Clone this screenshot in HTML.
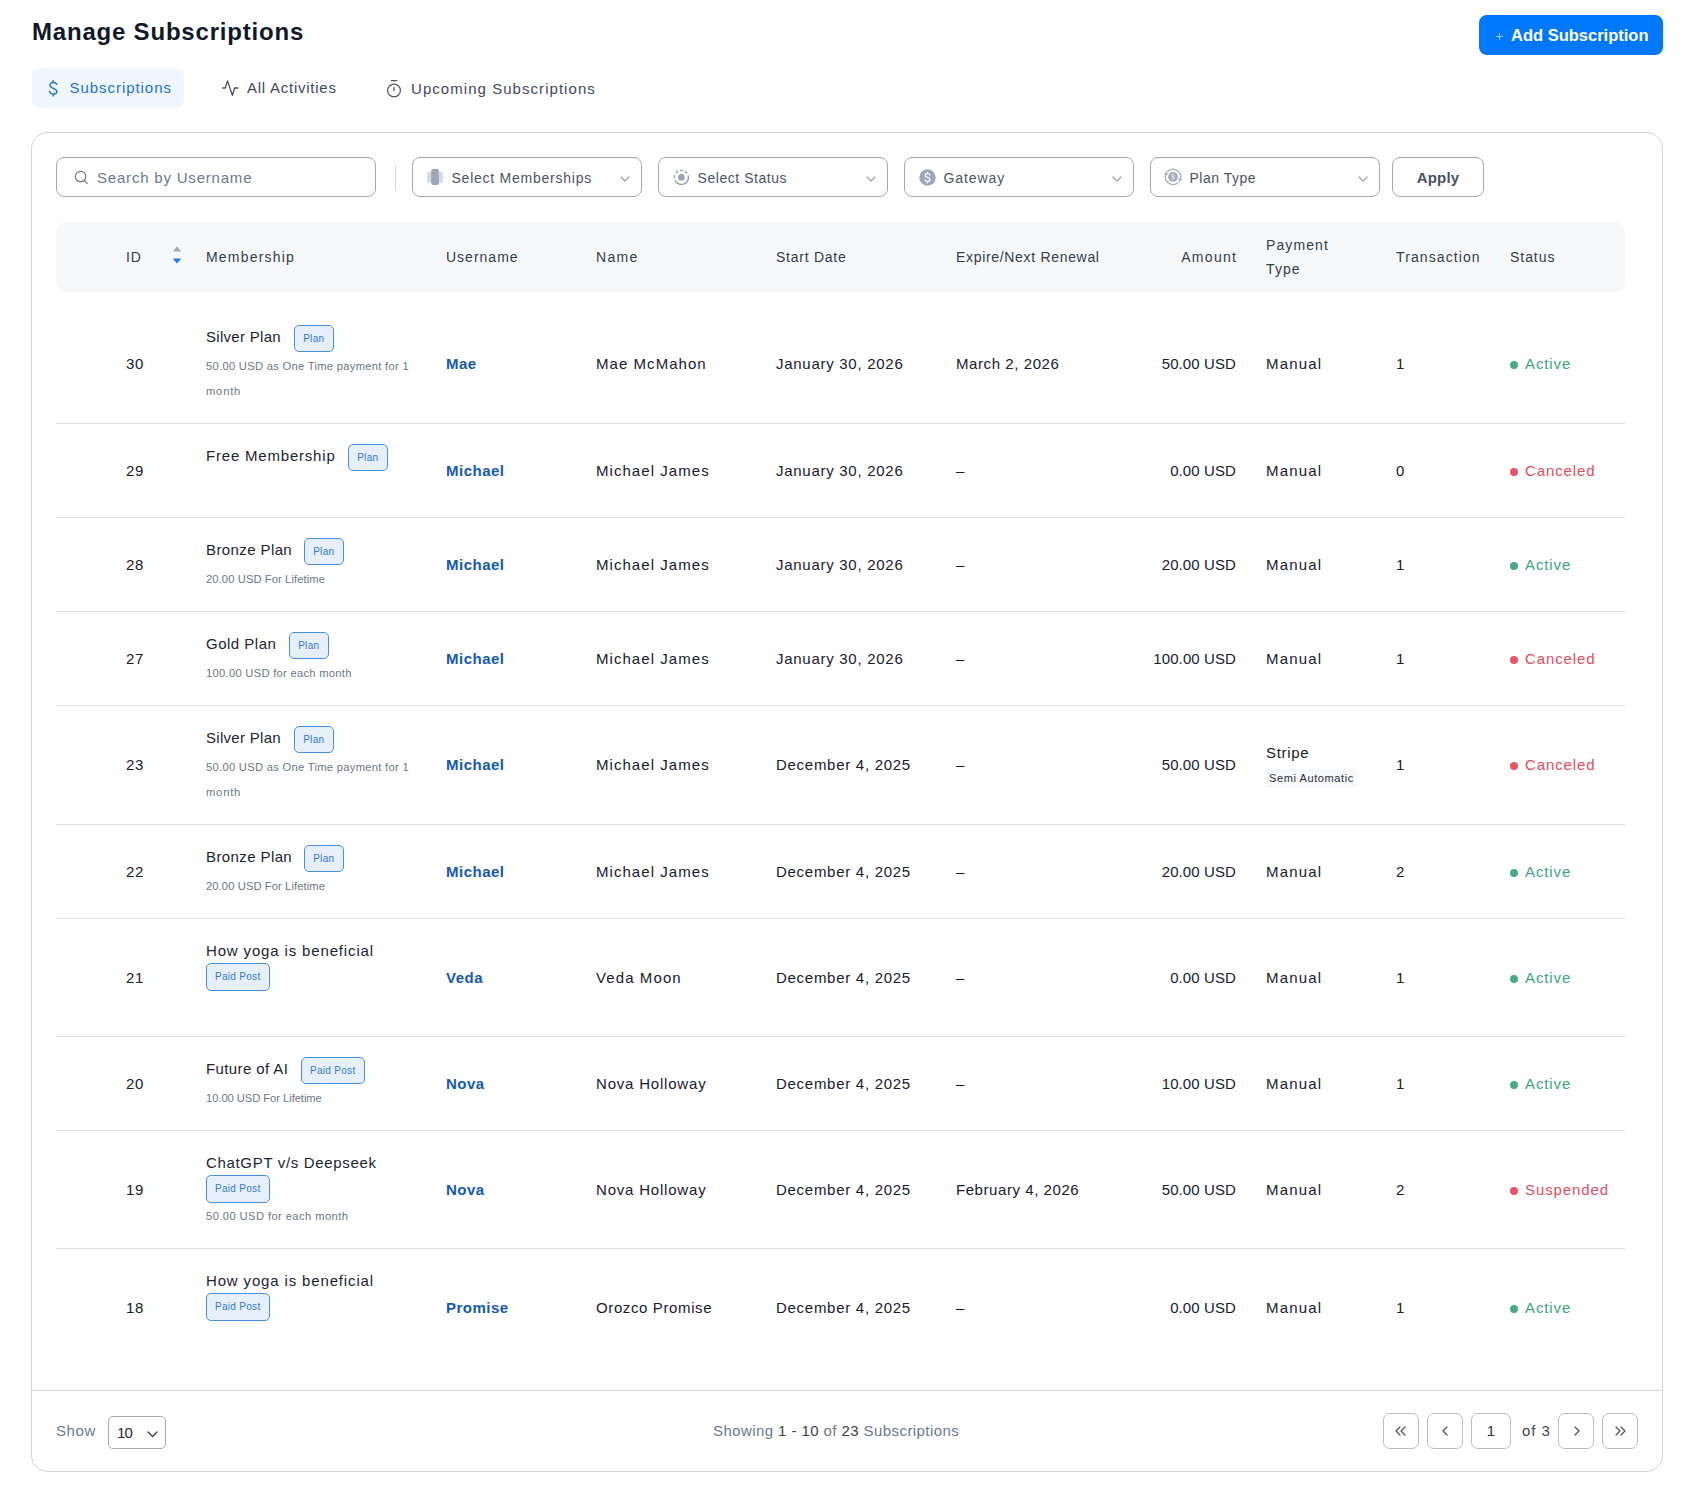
<!DOCTYPE html><html><head><meta charset="utf-8"><title>Manage Subscriptions</title><style>
*{box-sizing:border-box;margin:0;padding:0}
html,body{width:1696px;height:1497px;overflow:hidden;background:#fff}
body{position:relative;font-family:"Liberation Sans",sans-serif;color:#1f2937}
.a{position:absolute;white-space:nowrap}
h1{position:absolute;left:32px;top:14.7px;font-size:24px;line-height:34px;font-weight:700;color:#111827;letter-spacing:0.8px}
.addbtn{position:absolute;left:1479px;top:15px;width:184px;height:40px;background:#0077ff;border-radius:8px;color:#fff}
.addbtn .plus{position:absolute;left:17px;top:20.6px;width:7px;height:1px;background:#9fcbff}
.addbtn .plus:after{content:"";position:absolute;left:3px;top:-3px;width:1px;height:7px;background:#9fcbff}
.addbtn span{position:absolute;left:32px;top:10.2px;font-size:16.5px;line-height:20px;font-weight:700;letter-spacing:0}
.tab{position:absolute;top:68px;height:40px;font-size:15px;line-height:40px;color:#3f4a5a;letter-spacing:0.75px}
.tab.on{background:#f0f6fd;border-radius:8px;color:#1a73d9}
.card{position:absolute;left:31px;top:132px;width:1632px;height:1340px;border:1px solid #d6d6d6;border-radius:16px}
.inp{position:absolute;top:157px;height:40px;border:1px solid #a9a9a9;border-radius:8px;font-size:15px;color:#4b5563;letter-spacing:0.3px}
.inp .t{position:absolute;top:10px;line-height:20px}
.chev{position:absolute;top:14px}
.th{position:absolute;left:56px;top:222px;width:1569px;height:70px;background:#f6f8fa;border-radius:10px}
.hd{position:absolute;font-size:14px;line-height:24px;color:#333d4b;letter-spacing:0.9px}
.line{position:absolute;left:56px;width:1569px;height:1px;background:#dddddd}
.c{position:absolute;font-size:15px;line-height:20px;color:#18202c;letter-spacing:0.7px;white-space:nowrap}
.u{color:#1459b3;letter-spacing:0.5px;font-weight:700}
.mt{font-size:15px;line-height:25px;color:#1c2430;letter-spacing:0.5px}
.sub{font-size:11.2px;line-height:25px;color:#6e7687;letter-spacing:0.2px;margin-top:1px}
.badge{display:block;border:1px solid #4690e2;background:#e7effb;border-radius:5px;color:#2f7ae0;font-size:10px;height:27.5px;line-height:25.5px;text-align:center;letter-spacing:0.3px}
.badge.pl{width:39.5px}.badge.pp{width:63.5px}
.st{font-size:15px;letter-spacing:0.9px}
.dot{display:inline-block;width:8px;height:8px;border-radius:50%;margin-right:7px;vertical-align:0px}
.green{color:#3ea583}.green .dot{background:#47a988}
.red{color:#e34d60}.red .dot{background:#ec5262}
.semi{display:inline-block;background:#f7f9fd;font-size:11px;line-height:19px;padding:0 3px;color:#2b2f36;letter-spacing:0.6px}
.pg{position:absolute;top:1413px;width:35px;height:36px;border:1px solid #bdbdbd;border-radius:7px}
</style></head><body>
<h1>Manage Subscriptions</h1>
<div class="addbtn"><i class="plus"></i><span>Add Subscription</span></div>
<div class="tab on" style="left:32px;width:152px"><svg class="a" style="left:17px;top:12px" width="9" height="17" viewBox="0 0 9 17"><path d="M7.8 4.3C7.2 3.2 5.8 2.5 4.1 2.5 2.2 2.5 1 3.7 1 5.3 1 7 2.5 7.7 4.3 8.3 6.3 9 7.9 9.7 7.9 11.5 7.9 13.1 6.4 14 4.2 14 2.4 14 1 13.2 0.4 11.3M4.1 0.4V2.5M4.1 14V16" fill="none" stroke="#2870c8" stroke-width="1.4" stroke-linecap="round"/></svg><span class="a" style="left:37.5px;letter-spacing:0.95px">Subscriptions</span></div>
<div class="tab" style="left:222px;width:130px"><svg class="a" style="left:0;top:12px" width="17" height="16" viewBox="0 0 17 16"><path d="M0.7 8H3.3L5.5 0.9 10.4 15.4 12.6 8H16" fill="none" stroke="#474b5e" stroke-width="1.3" stroke-linejoin="round" stroke-linecap="round"/></svg><span class="a" style="left:25px">All Activities</span></div>
<div class="tab" style="left:386px;width:230px"><svg class="a" style="left:0;top:11px" width="15" height="19" viewBox="0 0 15 19"><circle cx="8" cy="11.5" r="6.4" fill="none" stroke="#50545e" stroke-width="1.2"/><path d="M5.3 1.6H10.7M8 8.4V11.5" stroke="#50545e" stroke-width="1.3" stroke-linecap="round"/></svg><span class="a" style="left:25px;top:0.7px;letter-spacing:1.05px">Upcoming Subscriptions</span></div>
<div class="card"></div>
<div class="inp" style="left:56px;width:320px;color:#6b7a90"><svg class="a" style="left:17px;top:12px" width="15" height="15" viewBox="0 0 15 15"><circle cx="6.6" cy="6.6" r="5.2" fill="none" stroke="#6e7583" stroke-width="1.15"/><path d="M10.5 10.5L13.3 13.3" stroke="#6e7583" stroke-width="1.15" stroke-linecap="round"/></svg><span class="t" style="left:40px;letter-spacing:0.8px">Search by Username</span></div>
<div class="a" style="left:395px;top:165px;width:1px;height:25px;background:#d9d9d9"></div>
<div class="inp" style="left:412px;width:230px"><svg class="a" style="left:13px;top:9.7px" width="18" height="18" viewBox="0 0 18 18"><rect x="1" y="3.7" width="16" height="11" rx="1.6" fill="#d7dbe4"/><rect x="5.2" y="1" width="7.7" height="16" rx="1.8" fill="#9ea6bb"/></svg><span class="t" style="left:38.5px;top:9.5px;font-size:14px;letter-spacing:0.76px">Select Memberships</span><svg class="chev" style="right:11px;top:17.5px" width="10" height="6" viewBox="0 0 10 6"><path d="M1 1L5 5 9 1" fill="none" stroke="#9aa0ad" stroke-width="1.2" stroke-linecap="round" stroke-linejoin="round"/></svg></div>
<div class="inp" style="left:658px;width:230px"><svg class="a" style="left:13.5px;top:10.5px" width="17" height="17" viewBox="0 0 17 17"><path d="M15.4 8.4A7 7 0 0 1 3.6 13.5" fill="none" stroke="#9ca3b5" stroke-width="1.5" stroke-linecap="round"/><path d="M3.6 13.5A7 7 0 1 1 15.4 8.4" fill="none" stroke="#9ca3b5" stroke-width="1.5" stroke-dasharray="2.8 2.3"/><circle cx="8.4" cy="8.4" r="3.3" fill="#9ca3b5"/></svg><span class="t" style="left:38.5px;top:9.5px;font-size:14px;letter-spacing:0.55px">Select Status</span><svg class="chev" style="right:11px;top:17.5px" width="10" height="6" viewBox="0 0 10 6"><path d="M1 1L5 5 9 1" fill="none" stroke="#9aa0ad" stroke-width="1.2" stroke-linecap="round" stroke-linejoin="round"/></svg></div>
<div class="inp" style="left:904px;width:230px"><svg class="a" style="left:13.5px;top:10.5px" width="17" height="17" viewBox="0 0 17 17"><circle cx="8.5" cy="8.5" r="8.2" fill="#9ea6bb"/><path d="M11 6C10.6 5.1 9.8 4.7 8.6 4.7 7.2 4.7 6.2 5.4 6.2 6.5c0 2.4 4.8 1.4 4.8 4 0 1.1-1 1.9-2.5 1.9-1.2 0-2.1-.5-2.5-1.4M8.5 3.3v1.4M8.5 12.4v1.4" fill="none" stroke="#fff" stroke-width="1.3" stroke-linecap="round"/></svg><span class="t" style="left:38.5px;top:9.5px;font-size:14px;letter-spacing:0.93px">Gateway</span><svg class="chev" style="right:11px;top:17.5px" width="10" height="6" viewBox="0 0 10 6"><path d="M1 1L5 5 9 1" fill="none" stroke="#9aa0ad" stroke-width="1.2" stroke-linecap="round" stroke-linejoin="round"/></svg></div>
<div class="inp" style="left:1150px;width:230px"><svg class="a" style="left:11px;top:9px" width="22" height="20" viewBox="0 0 22 20"><path d="M5.63 4.53A7.6 7.6 0 0 1 18.23 12.25M16.28 15.37A7.6 7.6 0 0 1 3.86 7.3" fill="none" stroke="#a7adba" stroke-width="1.25" stroke-linecap="round"/><path d="M19.75 12.74L16.71 11.76 17.55 14.34ZM2.36 6.75L5.36 7.85 4.61 5.23Z" fill="#a7adba" stroke="#a7adba" stroke-width="0.8" stroke-linejoin="round"/><circle cx="11" cy="9.9" r="4.85" fill="#a3aabd"/><path d="M12.3 8.2C12 7.6 11.5 7.3 10.9 7.3c-.8 0-1.3.5-1.3 1.1 0 1.5 2.8.9 2.8 2.5 0 .7-.6 1.2-1.5 1.2-.7 0-1.3-.3-1.5-.9" fill="none" stroke="#fff" stroke-width="1" stroke-linecap="round"/></svg><span class="t" style="left:38.5px;top:9.5px;font-size:14px;letter-spacing:0.5px">Plan Type</span><svg class="chev" style="right:11px;top:17.5px" width="10" height="6" viewBox="0 0 10 6"><path d="M1 1L5 5 9 1" fill="none" stroke="#9aa0ad" stroke-width="1.2" stroke-linecap="round" stroke-linejoin="round"/></svg></div>
<div class="inp" style="left:1392px;width:92px;text-align:center;color:#3e4a5e"><span class="t" style="left:0;width:90px;font-weight:700;letter-spacing:0.2px;color:#465167">Apply</span></div>
<div class="th"></div>
<div class="hd a" style="left:126px;top:245px;letter-spacing:0.9px">ID</div>
<div class="hd a" style="left:206px;top:245px;letter-spacing:1.2px">Membership</div>
<div class="hd a" style="left:446px;top:245px;letter-spacing:1.0px">Username</div>
<div class="hd a" style="left:596px;top:245px;letter-spacing:1.3px">Name</div>
<div class="hd a" style="left:776px;top:245px;letter-spacing:0.75px">Start Date</div>
<div class="hd a" style="left:956px;top:245px;letter-spacing:0.68px">Expire/Next Renewal</div>
<div class="hd a" style="left:1396px;top:245px;letter-spacing:1.1px">Transaction</div>
<div class="hd a" style="left:1510px;top:245px;letter-spacing:0.95px">Status</div>
<div class="hd a" style="left:1080px;width:157.3px;top:245px;text-align:right;letter-spacing:1.3px">Amount</div>
<div class="hd a" style="left:1266px;top:233px;line-height:24px;white-space:normal;width:90px;letter-spacing:1.1px">Payment<br>Type</div>
<svg class="a" style="left:172px;top:246px" width="10" height="18" viewBox="0 0 10 18"><path d="M5 0.5L9.3 5.6H0.7Z" fill="#a3a9bc"/><path d="M5 17.5L9.3 12.4H0.7Z" fill="#1a7cf5"/></svg>
<div class="line" style="top:423px"></div>
<div class="line" style="top:517px"></div>
<div class="line" style="top:611px"></div>
<div class="line" style="top:705px"></div>
<div class="line" style="top:824px"></div>
<div class="line" style="top:918px"></div>
<div class="line" style="top:1036px"></div>
<div class="line" style="top:1130px"></div>
<div class="line" style="top:1248px"></div>
<div class="c a" style="left:126px;top:353.5px;">30</div>
<div class="mt a" style="left:206px;top:324.2px;letter-spacing:0.3px">Silver Plan</div>
<div class="a" style="left:294px;top:324.5px"><span class="badge pl">Plan</span></div>
<div class="sub a" style="left:206px;top:352.5px;letter-spacing:0.29px">50.00 USD as One Time payment for 1</div>
<div class="sub a" style="left:206px;top:377.5px;letter-spacing:0.8px">month</div>
<div class="c u a" style="left:446px;top:353.5px;">Mae</div>
<div class="c a" style="left:596px;top:353.5px;letter-spacing:1.05px">Mae McMahon</div>
<div class="c a" style="left:776px;top:353.5px;letter-spacing:0.72px">January 30, 2026</div>
<div class="c a" style="left:956px;top:353.5px;letter-spacing:0.58px">March 2, 2026</div>
<div class="c a" style="left:1080px;width:156px;text-align:right;top:353.5px;letter-spacing:0.1px;margin-right:-0.1px">50.00 USD</div>
<div class="c a" style="left:1266px;top:353.5px;letter-spacing:1.2px">Manual</div>
<div class="c a" style="left:1396px;top:353.5px;">1</div>
<div class="c st a green" style="left:1510px;top:353.5px"><i class="dot"></i>Active</div>
<div class="c a" style="left:126px;top:461px;">29</div>
<div class="mt a" style="left:206px;top:443.2px;letter-spacing:0.8px">Free Membership</div>
<div class="a" style="left:348px;top:443.5px"><span class="badge pl">Plan</span></div>
<div class="sub a" style="left:206px;top:471.5px;letter-spacing:0px"></div>
<div class="c u a" style="left:446px;top:461px;">Michael</div>
<div class="c a" style="left:596px;top:461px;letter-spacing:1.05px">Michael James</div>
<div class="c a" style="left:776px;top:461px;letter-spacing:0.72px">January 30, 2026</div>
<div class="c a" style="left:956px;top:461px;letter-spacing:0px">&ndash;</div>
<div class="c a" style="left:1080px;width:156px;text-align:right;top:461px;letter-spacing:0.1px;margin-right:-0.1px">0.00 USD</div>
<div class="c a" style="left:1266px;top:461px;letter-spacing:1.2px">Manual</div>
<div class="c a" style="left:1396px;top:461px;">0</div>
<div class="c st a red" style="left:1510px;top:461px"><i class="dot"></i>Canceled</div>
<div class="c a" style="left:126px;top:555px;">28</div>
<div class="mt a" style="left:206px;top:537.2px;letter-spacing:0.4px">Bronze Plan</div>
<div class="a" style="left:304px;top:537.5px"><span class="badge pl">Plan</span></div>
<div class="sub a" style="left:206px;top:565.5px;letter-spacing:0.1px">20.00 USD For Lifetime</div>
<div class="c u a" style="left:446px;top:555px;">Michael</div>
<div class="c a" style="left:596px;top:555px;letter-spacing:1.05px">Michael James</div>
<div class="c a" style="left:776px;top:555px;letter-spacing:0.72px">January 30, 2026</div>
<div class="c a" style="left:956px;top:555px;letter-spacing:0px">&ndash;</div>
<div class="c a" style="left:1080px;width:156px;text-align:right;top:555px;letter-spacing:0.1px;margin-right:-0.1px">20.00 USD</div>
<div class="c a" style="left:1266px;top:555px;letter-spacing:1.2px">Manual</div>
<div class="c a" style="left:1396px;top:555px;">1</div>
<div class="c st a green" style="left:1510px;top:555px"><i class="dot"></i>Active</div>
<div class="c a" style="left:126px;top:649px;">27</div>
<div class="mt a" style="left:206px;top:631.2px;letter-spacing:0.5px">Gold Plan</div>
<div class="a" style="left:289px;top:631.5px"><span class="badge pl">Plan</span></div>
<div class="sub a" style="left:206px;top:659.5px;letter-spacing:0.28px">100.00 USD for each month</div>
<div class="c u a" style="left:446px;top:649px;">Michael</div>
<div class="c a" style="left:596px;top:649px;letter-spacing:1.05px">Michael James</div>
<div class="c a" style="left:776px;top:649px;letter-spacing:0.72px">January 30, 2026</div>
<div class="c a" style="left:956px;top:649px;letter-spacing:0px">&ndash;</div>
<div class="c a" style="left:1080px;width:156px;text-align:right;top:649px;letter-spacing:0.1px;margin-right:-0.1px">100.00 USD</div>
<div class="c a" style="left:1266px;top:649px;letter-spacing:1.2px">Manual</div>
<div class="c a" style="left:1396px;top:649px;">1</div>
<div class="c st a red" style="left:1510px;top:649px"><i class="dot"></i>Canceled</div>
<div class="c a" style="left:126px;top:754.5px;">23</div>
<div class="mt a" style="left:206px;top:725.2px;letter-spacing:0.3px">Silver Plan</div>
<div class="a" style="left:294px;top:725.5px"><span class="badge pl">Plan</span></div>
<div class="sub a" style="left:206px;top:753.5px;letter-spacing:0.29px">50.00 USD as One Time payment for 1</div>
<div class="sub a" style="left:206px;top:778.5px;letter-spacing:0.8px">month</div>
<div class="c u a" style="left:446px;top:754.5px;">Michael</div>
<div class="c a" style="left:596px;top:754.5px;letter-spacing:1.05px">Michael James</div>
<div class="c a" style="left:776px;top:754.5px;letter-spacing:0.72px">December 4, 2025</div>
<div class="c a" style="left:956px;top:754.5px;letter-spacing:0px">&ndash;</div>
<div class="c a" style="left:1080px;width:156px;text-align:right;top:754.5px;letter-spacing:0.1px;margin-right:-0.1px">50.00 USD</div>
<div class="c a" style="left:1266px;top:742.5px">Stripe</div>
<div class="a" style="left:1266px;top:767.5px"><span class="semi">Semi Automatic</span></div>
<div class="c a" style="left:1396px;top:754.5px;">1</div>
<div class="c st a red" style="left:1510px;top:754.5px"><i class="dot"></i>Canceled</div>
<div class="c a" style="left:126px;top:862px;">22</div>
<div class="mt a" style="left:206px;top:844.2px;letter-spacing:0.4px">Bronze Plan</div>
<div class="a" style="left:304px;top:844.5px"><span class="badge pl">Plan</span></div>
<div class="sub a" style="left:206px;top:872.5px;letter-spacing:0.1px">20.00 USD For Lifetime</div>
<div class="c u a" style="left:446px;top:862px;">Michael</div>
<div class="c a" style="left:596px;top:862px;letter-spacing:1.05px">Michael James</div>
<div class="c a" style="left:776px;top:862px;letter-spacing:0.72px">December 4, 2025</div>
<div class="c a" style="left:956px;top:862px;letter-spacing:0px">&ndash;</div>
<div class="c a" style="left:1080px;width:156px;text-align:right;top:862px;letter-spacing:0.1px;margin-right:-0.1px">20.00 USD</div>
<div class="c a" style="left:1266px;top:862px;letter-spacing:1.2px">Manual</div>
<div class="c a" style="left:1396px;top:862px;">2</div>
<div class="c st a green" style="left:1510px;top:862px"><i class="dot"></i>Active</div>
<div class="c a" style="left:126px;top:968px;">21</div>
<div class="mt a" style="left:206px;top:938.0px;letter-spacing:0.85px">How yoga is beneficial</div>
<div class="a" style="left:206px;top:963.0px;height:28px"><span class="badge pp">Paid Post</span></div>
<div class="sub a" style="left:206px;top:991.0px;letter-spacing:0px"></div>
<div class="c u a" style="left:446px;top:968px;">Veda</div>
<div class="c a" style="left:596px;top:968px;letter-spacing:1.1px">Veda Moon</div>
<div class="c a" style="left:776px;top:968px;letter-spacing:0.72px">December 4, 2025</div>
<div class="c a" style="left:956px;top:968px;letter-spacing:0px">&ndash;</div>
<div class="c a" style="left:1080px;width:156px;text-align:right;top:968px;letter-spacing:0.1px;margin-right:-0.1px">0.00 USD</div>
<div class="c a" style="left:1266px;top:968px;letter-spacing:1.2px">Manual</div>
<div class="c a" style="left:1396px;top:968px;">1</div>
<div class="c st a green" style="left:1510px;top:968px"><i class="dot"></i>Active</div>
<div class="c a" style="left:126px;top:1074px;">20</div>
<div class="mt a" style="left:206px;top:1056.2px;letter-spacing:0.4px">Future of AI</div>
<div class="a" style="left:301px;top:1056.5px"><span class="badge pp">Paid Post</span></div>
<div class="sub a" style="left:206px;top:1084.5px;letter-spacing:-0.05px">10.00 USD For Lifetime</div>
<div class="c u a" style="left:446px;top:1074px;">Nova</div>
<div class="c a" style="left:596px;top:1074px;letter-spacing:0.8px">Nova Holloway</div>
<div class="c a" style="left:776px;top:1074px;letter-spacing:0.72px">December 4, 2025</div>
<div class="c a" style="left:956px;top:1074px;letter-spacing:0px">&ndash;</div>
<div class="c a" style="left:1080px;width:156px;text-align:right;top:1074px;letter-spacing:0.1px;margin-right:-0.1px">10.00 USD</div>
<div class="c a" style="left:1266px;top:1074px;letter-spacing:1.2px">Manual</div>
<div class="c a" style="left:1396px;top:1074px;">1</div>
<div class="c st a green" style="left:1510px;top:1074px"><i class="dot"></i>Active</div>
<div class="c a" style="left:126px;top:1180.3px;">19</div>
<div class="mt a" style="left:206px;top:1150.0px;letter-spacing:0.67px">ChatGPT v/s Deepseek</div>
<div class="a" style="left:206px;top:1175.0px;height:28px"><span class="badge pp">Paid Post</span></div>
<div class="sub a" style="left:206px;top:1203.0px;letter-spacing:0.41px">50.00 USD for each month</div>
<div class="c u a" style="left:446px;top:1180.3px;">Nova</div>
<div class="c a" style="left:596px;top:1180.3px;letter-spacing:0.8px">Nova Holloway</div>
<div class="c a" style="left:776px;top:1180.3px;letter-spacing:0.72px">December 4, 2025</div>
<div class="c a" style="left:956px;top:1180.3px;letter-spacing:0.56px">February 4, 2026</div>
<div class="c a" style="left:1080px;width:156px;text-align:right;top:1180.3px;letter-spacing:0.1px;margin-right:-0.1px">50.00 USD</div>
<div class="c a" style="left:1266px;top:1180.3px;letter-spacing:1.2px">Manual</div>
<div class="c a" style="left:1396px;top:1180.3px;">2</div>
<div class="c st a red" style="left:1510px;top:1180.3px"><i class="dot"></i>Suspended</div>
<div class="c a" style="left:126px;top:1298px;">18</div>
<div class="mt a" style="left:206px;top:1268.0px;letter-spacing:0.85px">How yoga is beneficial</div>
<div class="a" style="left:206px;top:1293.0px;height:28px"><span class="badge pp">Paid Post</span></div>
<div class="sub a" style="left:206px;top:1321.0px;letter-spacing:0px"></div>
<div class="c u a" style="left:446px;top:1298px;">Promise</div>
<div class="c a" style="left:596px;top:1298px;letter-spacing:0.62px">Orozco Promise</div>
<div class="c a" style="left:776px;top:1298px;letter-spacing:0.72px">December 4, 2025</div>
<div class="c a" style="left:956px;top:1298px;letter-spacing:0px">&ndash;</div>
<div class="c a" style="left:1080px;width:156px;text-align:right;top:1298px;letter-spacing:0.1px;margin-right:-0.1px">0.00 USD</div>
<div class="c a" style="left:1266px;top:1298px;letter-spacing:1.2px">Manual</div>
<div class="c a" style="left:1396px;top:1298px;">1</div>
<div class="c st a green" style="left:1510px;top:1298px"><i class="dot"></i>Active</div>
<div class="a" style="left:32px;top:1390px;width:1630px;height:1px;background:#d9d9d9"></div>
<div class="a" style="left:56px;top:1421px;font-size:15px;line-height:20px;color:#6b7a90;letter-spacing:0.6px">Show</div>
<div class="a" style="left:108px;top:1416px;width:58px;height:33px;border:1px solid #a9a9a9;border-radius:5px"><span class="a" style="left:8px;top:6px;font-size:15px;line-height:20px;color:#1f2937;letter-spacing:-0.8px">10</span><svg class="a" style="left:38px;top:13.7px" width="11" height="7" viewBox="0 0 11 7"><path d="M1 1L5.5 5.5 10 1" fill="none" stroke="#555" stroke-width="1.6" stroke-linecap="round" stroke-linejoin="round"/></svg></div>
<div class="a" style="left:713px;top:1421px;font-size:15px;line-height:20px;color:#6b7a90;letter-spacing:0.42px">Showing <span style="color:#3b4250">1 - 10</span> of <span style="color:#3b4250">23</span> Subscriptions</div>
<div class="pg" style="left:1383px;width:36px"><svg class="a" style="left:11px;top:12px" width="12" height="10" viewBox="0 0 12 10"><path d="M5 1L1 5 5 9" fill="none" stroke="#4f5563" stroke-width="1.25" stroke-linecap="round" stroke-linejoin="round"/><path d="M10 1L6 5 10 9" fill="none" stroke="#4f5563" stroke-width="1.25" stroke-linecap="round" stroke-linejoin="round"/></svg></div>
<div class="pg" style="left:1427px;width:36px"><svg class="a" style="left:14px;top:12px" width="8" height="10" viewBox="0 0 8 10"><path d="M5 1L1 5 5 9" fill="none" stroke="#4f5563" stroke-width="1.25" stroke-linecap="round" stroke-linejoin="round"/></svg></div>
<div class="pg" style="left:1471px;width:40px"><span class="a" style="left:0;width:38px;text-align:center;top:7px;font-size:15px;line-height:20px;color:#2d3340">1</span></div>
<div class="a" style="left:1522px;top:1421px;font-size:15px;line-height:20px;color:#3f4552;letter-spacing:0.9px">of 3</div>
<div class="pg" style="left:1558px;width:36px"><svg class="a" style="left:15px;top:12px" width="8" height="10" viewBox="0 0 8 10"><path d="M1 1L5 5 1 9" fill="none" stroke="#4f5563" stroke-width="1.25" stroke-linecap="round" stroke-linejoin="round"/></svg></div>
<div class="pg" style="left:1602px;width:36px"><svg class="a" style="left:12px;top:12px" width="12" height="10" viewBox="0 0 12 10"><path d="M1 1L5 5 1 9" fill="none" stroke="#4f5563" stroke-width="1.25" stroke-linecap="round" stroke-linejoin="round"/><path d="M6 1L10 5 6 9" fill="none" stroke="#4f5563" stroke-width="1.25" stroke-linecap="round" stroke-linejoin="round"/></svg></div>
</body></html>
